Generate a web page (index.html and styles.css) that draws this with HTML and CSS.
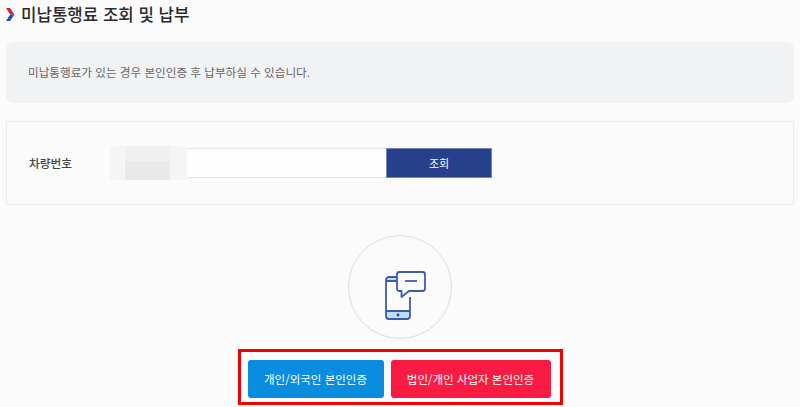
FILE: index.html
```html
<!DOCTYPE html>
<html lang="ko">
<head>
<meta charset="utf-8">
<title>미납통행료 조회 및 납부</title>
<link rel="stylesheet" href="styles.css">
</head>
<body>
<main class="page">
  <h1 class="title">
    <svg class="chevron" width="9" height="13" viewBox="0 0 9 13" aria-hidden="true">
      <path d="M0 0H4L8.500 6.500H4.200Z" fill="#e0202c"/>
      <path d="M4.200 6.500H8.500L4 13H0Z" fill="#1450c0"/>
    </svg>
    미납통행료 조회 및 납부
  </h1>
  <p class="notice">미납통행료가 있는 경우 본인인증 후 납부하실 수 있습니다.</p>
  <form class="search">
    <label class="search-label">차량번호</label>
    <div class="field">
      <div class="blur">
        <i></i><i></i><i></i><i></i><i></i><i></i>
      </div>
    </div>
    <button type="button" class="search-btn">조회</button>
  </form>
  <div class="circle">
    <svg width="42" height="50" viewBox="0 0 42 50" aria-hidden="true">
      <path d="M2 10V9A3 3 0 0 1 5 6H14V10Z" fill="#bcdcf5"/>
      <rect x="2" y="40" width="24" height="8" rx="2" fill="#bcdcf5"/>
      <path d="M14 6H5A3 3 0 0 0 2 9V45A3 3 0 0 0 5 48H23A3 3 0 0 0 26 45V26" fill="none" stroke="#3c5ca8" stroke-width="1.800"/>
      <path d="M2 10H14M2 40H26" fill="none" stroke="#3c5ca8" stroke-width="1.800"/>
      <circle cx="14" cy="44" r="1.400" fill="#2c4a94"/>
      <path d="M15.500 1H38.500A2.500 2.500 0 0 1 41 3.500V17.500A2.500 2.500 0 0 1 38.500 20H25L17.500 26V20H15.500A2.500 2.500 0 0 1 13 17.500V3.500A2.500 2.500 0 0 1 15.500 1Z" fill="#fbfbfb" stroke="#3c5ca8" stroke-width="1.800" stroke-linejoin="round"/>
      <path d="M21 10H33" stroke="#3c5ca8" stroke-width="1.800"/>
    </svg>
  </div>
  <div class="actions-wrap">
    <div class="actions">
      <button type="button" class="auth auth-blue">개인/외국인 본인인증</button>
      <button type="button" class="auth auth-red">법인/개인 사업자 본인인증</button>
    </div>
  </div>
</main>
</body>
</html>
```
FILE: styles.css
```css
* { box-sizing: border-box; }
html, body { margin: 0; padding: 0; }
body {
  width: 800px;
  height: 407px;
  overflow: hidden;
  background: #fbfbfb;
  font-family: "Noto Sans CJK KR", "Noto Sans", sans-serif;
}
.page {
  display: flex;
  flex-direction: column;
  padding: 0 6px;
}
.title {
  display: flex;
  align-items: center;
  gap: 6px;
  height: 28px;
  margin: 0 0 14px;
  font-size: 16.800px;
  font-weight: 500;
  color: #2b2b2b;
}
.chevron { flex: none; }
.notice {
  display: flex;
  align-items: center;
  height: 61px;
  margin: 0 0 18px;
  padding: 0 22px 2px 22px;
  background: #f1f2f4;
  border-radius: 8px;
  font-size: 11.600px;
  color: #666;
}
.search {
  display: flex;
  align-items: center;
  height: 84px;
  margin: 0 0 30px;
  padding: 0 0 1px 22px;
  border: 1px solid #ececec;
}
.search-label {
  width: 81px;
  font-size: 11.700px;
  font-weight: 500;
  color: #444;
}
.field {
  width: 276px;
  height: 30px;
  background: #fdfdfd;
  border-top: 1px solid #e6e6e6;
  border-bottom: 1px solid #e6e6e6;
}
.blur {
  display: grid;
  grid-template-columns: 15px 45px 17px;
  grid-template-rows: 15px 19px;
  width: 77px;
  height: 34px;
  margin-top: -3px;
}
.blur i { background: #f5f5f5; }
.blur i:nth-child(2) { background: #f0f0f0; }
.blur i:nth-child(5) { background: #e9e9e9; }
.search-btn {
  width: 106px;
  height: 30px;
  padding: 0;
  border: 1px solid #6f86bb;
  background: #27408b;
  color: #fff;
  font-family: inherit;
  font-size: 11px;
}
.circle {
  display: flex;
  align-self: center;
  width: 104px;
  height: 104px;
  margin: 0 0 10px;
  padding: 34.500px 0 0 34.500px;
  border: 1.500px solid #dcdcdc;
  border-radius: 50%;
}
.actions-wrap { display: flex; justify-content: center; }
.actions {
  display: flex;
  gap: 7px;
  padding: 8px 9px 4px 7px;
  border: 3px solid #f00000;
}
.auth {
  height: 38px;
  padding: 0;
  border: 0;
  border-radius: 3px;
  color: #fff;
  font-family: inherit;
  font-size: 11.500px;
}
.auth-blue { width: 136px; background: #0a8cdf; }
.auth-red { width: 160px; background: #f81c43; }
```
